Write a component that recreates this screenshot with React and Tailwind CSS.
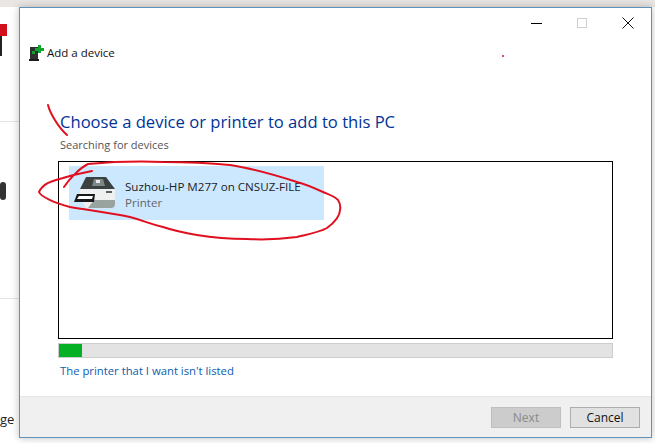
const ui = { fontFamily: '"Open Sans", "Noto Sans", sans-serif' };

function PrinterIcon() {
  return (
    <svg width="42" height="32" viewBox="0 0 42 32" className="shrink-0">
      <path d="M12 0 L32 0 L41 12 L6 12 Z" fill="#3a4140" />
      <path d="M20 2 L29 2 L31 9 L18 9 Z" fill="#7d8785" />
      <rect x="22" y="3" width="4" height="3" fill="#e6e9e8" />
      <path d="M6 12 L41 12 L41 27 Q41 31 37 31 L12 31 L8 24 L6 24 Z" fill="#eef1f0" />
      <path d="M20 23 L41 23 L41 27 Q41 31 37 31 L14 31 Z" fill="#98a3a0" />
      <rect x="32" y="14" width="6" height="2" fill="#59625f" />
      <path d="M3 17 L21 17 L20 25 L0 25 Z" fill="#17191a" />
      <path d="M5 19 L19 19 L18 22 L3 22 Z" fill="#ffffff" />
    </svg>
  );
}

function DeviceIcon() {
  return (
    <svg width="16" height="18" viewBox="0 0 16 18" className="shrink-0">
      <rect x="1" y="3" width="8" height="12" fill="#2f2f2f" />
      <rect x="0" y="15" width="10" height="2" fill="#1c1c1c" />
      <rect x="3" y="7" width="3" height="3" fill="#0fa02a" />
      <path d="M9 1 H12 V4 H15 V7 H12 V9 H9 V7 H6 V4 H9 Z" fill="#12a52e" />
    </svg>
  );
}

function Scribbles() {
  return (
    <svg width="655" height="443" viewBox="0 0 655 443" fill="none" className="absolute left-0 top-0 pointer-events-none">
      <g stroke="#e01020" strokeWidth="2" strokeLinecap="round" strokeLinejoin="round">
        <path d="M48 105 C50 113 58 127 67 135" />
        <path d="M92 171 C82 173 72 175 63 178 C52 181 43 183 39 192 C41 197 55 203 70 207 C95 211 112 213 130 217 C145 221 150 224 163 227 C175 231 185 233 197 235 C215 238 230 239 247 239 C265 240 282 239 297 237 C310 234 320 232 327 228 C335 222 340 216 340 210 C341 205 340 203 338 200 C334 196 330 195 323 192 C312 187 305 184 297 182 C275 175 250 168 230 165 C210 163 185 162 163 162 C135 161 110 162 88 164 C80 168 70 178 64 187" />
      </g>
      <circle cx="503" cy="56" r="1" fill="#e01020" />
    </svg>
  );
}

export default function App() {
  return (
    <div className="relative w-[655px] h-[443px] overflow-hidden bg-white" style={ui}>
      {/* what is left of the window behind the dialog */}
      <div className="h-[7px] bg-[#e9e6e3]" />
      <div className="absolute left-0 top-[24px] w-[7px] h-[12px] bg-[#d0101c]" />
      <div className="absolute left-0 top-[36px] w-[2px] h-[20px] bg-[#222222]" />
      <div className="absolute left-0 top-[121px] w-[19px] h-px bg-[#e4e4e4]" />
      <div className="absolute left-0 top-[182px] w-[6px] h-[18px] rounded-sm bg-[#333333]" />
      <div className="absolute left-0 top-[298px] w-[19px] h-px bg-[#e4e4e4]" />
      <div className="absolute left-0 top-[411px] text-[13px] leading-4 text-[#222222]">ge</div>

      <div className="absolute left-[19px] top-[7px] w-[633px] h-[431px] flex flex-col bg-white border border-[#5f92b8] shadow-[0_0_8px_rgba(0,0,0,0.25)]">
        <div className="h-[30px] flex items-start justify-end">
          <div className="w-[46px] h-[30px] flex items-center justify-center">
            <div className="w-[11px] h-px bg-black" />
          </div>
          <div className="w-[46px] h-[30px] flex items-center justify-center">
            <div className="w-[10px] h-[10px] border border-[#cfcfcf]" />
          </div>
          <div className="w-[46px] h-[30px] flex items-center justify-center">
            <svg width="12" height="12" viewBox="0 0 12 12" stroke="#111111" strokeWidth="1">
              <path d="M0.5 0.5 L11.5 11.5 M11.5 0.5 L0.5 11.5" />
            </svg>
          </div>
        </div>

        <div className="flex items-center gap-[2px] pl-[9px] h-[30px]">
          <DeviceIcon />
          <span className="text-[11.5px] text-[#111111]">Add a device</span>
        </div>

        <div className="flex-1 flex flex-col px-[38px] pt-[42px]">
          <h1 className="pl-[2px] text-[16.6px] leading-[24px] font-normal text-[#003399]">
            Choose a device or printer to add to this PC
          </h1>
          <p className="pl-[2px] mt-[3px] text-[11px] leading-[16px] text-[#555555]">Searching for devices</p>
          <div className="mt-[8px] h-[178px] border border-black bg-white pl-[10px] pt-[4px]">
            <div className="w-[255px] h-[54px] flex items-center gap-[9px] pl-[5px] bg-[#cce8ff]">
              <PrinterIcon />
              <div className="flex flex-col mt-[3px]">
                <span className="text-[11.6px] leading-[16px] text-[#222222]">Suzhou-HP M277 on CNSUZ-FILE</span>
                <span className="text-[11.6px] leading-[16px] text-[#666666]">Printer</span>
              </div>
            </div>
          </div>
          <div className="mt-[4px] h-[15px] bg-[#e3e3e3] border border-[#cdcdcd]">
            <div className="w-[23px] h-full bg-[#06b025]" />
          </div>
          <a className="pl-[2px] mt-[5px] text-[11.3px] leading-[16px] text-[#0b5cad]">The printer that I want isn't listed</a>
        </div>

        <div className="h-[41px] flex items-start justify-end gap-[9px] pt-[10px] pr-[11px] bg-[#f0f0f0] border-t border-[#e6e6e6]">
          <button className="w-[70px] h-[21px] text-[12px] text-[#8a8a8a] bg-[#cccccc] border border-[#bfbfbf]">Next</button>
          <button className="w-[70px] h-[21px] text-[12px] text-[#111111] bg-[#e1e1e1] border border-[#adadad]">Cancel</button>
        </div>
      </div>

      <Scribbles />
    </div>
  );
}
